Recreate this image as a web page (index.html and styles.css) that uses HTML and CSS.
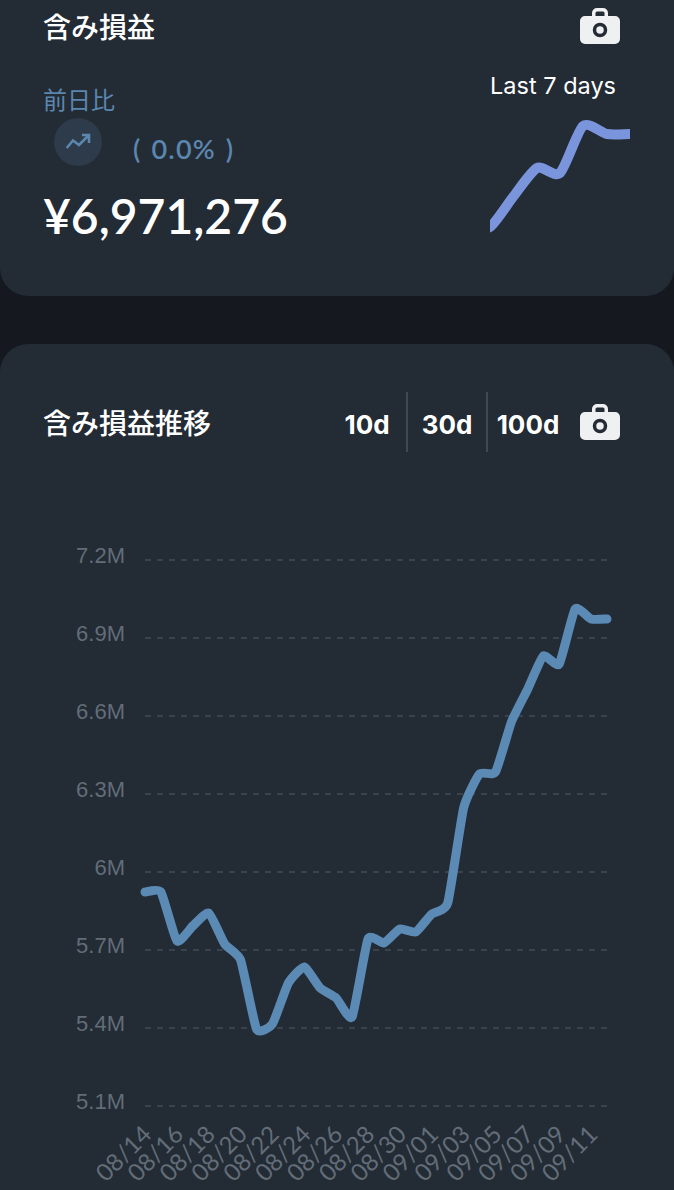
FILE: index.html
```html
<!DOCTYPE html>
<html lang="ja">
<head>
  <meta charset="utf-8">
  <title>含み損益</title>
  <link rel="stylesheet" href="styles.css">
</head>
<body>
  <section class="card card-summary">
    <div class="card-head">
      <h2 class="card-title">含み損益</h2>
      <svg class="camera" viewBox="0 0 40 36"><use href="#camera-icon"></use></svg>
    </div>
    <div class="summary">
      <div class="summary-left">
        <div class="compare-label">前日比</div>
        <div class="compare-row">
          <span class="trend-badge">
            <svg viewBox="0 0 48 48" width="48" height="48"><path d="M12.700 30L19 22.500l6 4.500 10-10M28 17h7v8" fill="none" stroke="#5b86ae" stroke-width="2.600"/></svg>
          </span>
          <span class="compare-pct">( 0.0% )</span>
        </div>
        <div class="amount">¥6,971,276</div>
      </div>
      <div class="summary-right">
        <div class="spark-label">Last 7 days</div>
        <svg class="spark" viewBox="490 110 140 130"><path id="sparkLine" fill="none" stroke="#7b95dd" stroke-width="10"/></svg>
      </div>
    </div>
  </section>

  <section class="card card-history">
    <div class="card-head history-head">
      <h2 class="card-title">含み損益推移</h2>
      <div class="ranges">
        <span class="range">10d</span>
        <span class="range">30d</span>
        <span class="range">100d</span>
      </div>
      <svg class="camera" viewBox="0 0 40 36"><use href="#camera-icon"></use></svg>
    </div>
    <svg class="chart" id="chart" viewBox="0 480 674 710">
      <g id="grid"></g>
      <path id="historyLine" fill="none" stroke="#5b8ab5" stroke-width="9" stroke-linecap="round" stroke-linejoin="round"/>
      <g id="xLabels"></g>
    </svg>
  </section>

  <svg class="defs" width="0" height="0">
    <symbol id="camera-icon" viewBox="0 0 40 36">
      <path fill="#eef0f2" fill-rule="evenodd" d="M12 8V5a5 5 0 0 1 5-5h6a5 5 0 0 1 5 5v3h7a5 5 0 0 1 5 5v18a5 5 0 0 1-5 5H5a5 5 0 0 1-5-5V13a5 5 0 0 1 5-5zM15.500 8h9V5a1.500 1.500 0 0 0-1.500-1.500h-6A1.500 1.500 0 0 0 15.500 5z"/>
      <circle cx="20" cy="22" r="5.500" fill="#eef0f2" stroke="#232b35" stroke-width="3.500"/>
    </symbol>
  </svg>

  <script src="chart.js"></script>
</body>
</html>
```

FILE: styles.css
```css
html, body {
    margin: 0;
    height: 1190px;
    overflow: hidden;
    background: #15191f;
}

body {
    color: #fff;
    font-family: "Lato", "Noto Sans CJK JP", sans-serif;
}

.card {
    background: #232b35;
}

.card-summary {
    height: 296px;
    box-sizing: border-box;
    padding-top: 8px;
    border-radius: 0 0 28px 28px;
}

.card-history {
    height: 846px;
    margin-top: 48px;
    border-radius: 28px 28px 0 0;
    overflow: hidden;
}

.card-head {
    display: flex;
    align-items: center;
    justify-content: space-between;
    height: 36px;
    padding: 0 54px 0 43px;
}

.card-title {
    margin: 0;
    font-family: "Noto Sans CJK JP", sans-serif;
    font-size: 28px;
    font-weight: 500;
    line-height: 40px;
}

.camera {
    display: block;
    width: 40px;
    height: 36px;
    flex: none;
}

.summary {
    display: flex;
    justify-content: space-between;
    padding-left: 43px;
}

.summary-left {
    padding-top: 37px;
}

.compare-label {
    font-family: "Noto Sans CJK JP", sans-serif;
    font-size: 24px;
    font-weight: 400;
    line-height: 36px;
    color: #5b86ae;
}

.compare-row {
    display: flex;
    align-items: center;
    height: 48px;
    margin-top: 1px;
    padding-left: 11px;
}

.trend-badge {
    display: flex;
    align-items: center;
    justify-content: center;
    width: 48px;
    height: 48px;
    border-radius: 50%;
    background: #2d3b4a;
}

.compare-pct {
    margin: 12px 0 0 31px;
    font-size: 27px;
    font-weight: 600;
    letter-spacing: 1.200px;
    word-spacing: 2px;
    color: #5b86ae;
    white-space: pre;
}

.amount {
    margin-top: 20px;
    font-size: 48px;
    font-weight: 600;
    line-height: 60px;
}

.summary-right {
    width: 184px;
    padding-top: 27px;
}

.spark-label {
    padding-right: 58px;
    font-family: "Inter", sans-serif;
    font-size: 23.500px;
    line-height: 30px;
    text-align: right;
    white-space: nowrap;
}

.spark {
    display: block;
    width: 140px;
    height: 130px;
    margin: 9px 0 0;
}

.history-head {
    height: 60px;
    padding-top: 48px;
    justify-content: flex-start;
}

.ranges {
    display: flex;
    margin-left: auto;
    margin-right: 12px;
}

.range {
    width: 80px;
    height: 60px;
    box-sizing: border-box;
    font-family: "Inter", sans-serif;
    font-size: 26px;
    font-weight: 700;
    line-height: 66px;
    text-align: center;
    border-right: 2px solid #3f4956;
}

.range:last-child {
    border-right: 0;
}

.chart {
    display: block;
    width: 674px;
    height: 710px;
    margin-top: 28px;
}

.defs {
    position: absolute;
}

.grid-line {
    stroke: #414b57;
    stroke-width: 1.500;
    stroke-dasharray: 6 6;
}

.y-label {
    fill: #626d78;
    font-family: "Liberation Sans", sans-serif;
    font-size: 22px;
    text-anchor: end;
}

.x-label {
    fill: #626d78;
    font-family: "Lato", sans-serif;
    font-size: 24px;
    text-anchor: end;
}
```

FILE: chart.js
```js
const NS = "http://www.w3.org/2000/svg";

// curve through the points, t = how round the corners are
function curve(pts, t) {
  let d = "M" + pts[0][0] + " " + pts[0][1];
  for (let i = 0; i < pts.length - 1; i++) {
    const p0 = pts[i - 1] || pts[i];
    const p1 = pts[i];
    const p2 = pts[i + 1];
    const p3 = pts[i + 2] || p2;
    const c1x = p1[0] + (p2[0] - p0[0]) * t;
    const c1y = p1[1] + (p2[1] - p0[1]) * t;
    const c2x = p2[0] - (p3[0] - p1[0]) * t;
    const c2y = p2[1] - (p3[1] - p1[1]) * t;
    d += "C" + c1x.toFixed(1) + " " + c1y.toFixed(1) + " " + c2x.toFixed(1) + " " + c2y.toFixed(1) + " " + p2[0] + " " + p2[1];
  }
  return d;
}

function addEl(parent, tag, cls, attrs, text) {
  const el = document.createElementNS(NS, tag);
  el.setAttribute("class", cls);
  for (const k in attrs) el.setAttribute(k, attrs[k]);
  if (text) el.textContent = text;
  parent.appendChild(el);
}

// Last 7 days
const spark = [[467, 230], [490, 227], [513, 197], [537, 168], [560, 173], [583, 126], [607, 134], [630, 134], [653, 134]];
document.getElementById("sparkLine").setAttribute("d", curve(spark, 0.12));

// grid
const ticks = ["7.2M", "6.9M", "6.6M", "6.3M", "6M", "5.7M", "5.4M", "5.1M"];
const grid = document.getElementById("grid");
ticks.forEach((label, i) => {
  const y = 560 + i * 78;
  addEl(grid, "line", "grid-line", { x1: 145, x2: 607, y1: y, y2: y });
  addEl(grid, "text", "y-label", { x: 125, y: y + 3 }, label);
});

// history
const ys = [892, 892, 941, 926, 913, 944, 960, 1029, 1024, 983, 967, 988, 998, 1017, 939,
  943, 929, 932, 914, 903, 808, 774, 772, 722, 690, 656, 664, 609, 619, 619];
const line = ys.map((y, i) => [+(145 + i * 15.93).toFixed(1), y]);
document.getElementById("historyLine").setAttribute("d", curve(line, 0.08));

const dates = ["08/14", "08/16", "08/18", "08/20", "08/22", "08/24", "08/26", "08/28",
  "08/30", "09/01", "09/03", "09/05", "09/07", "09/09", "09/11"];
const xl = document.getElementById("xLabels");
dates.forEach((label, i) => {
  const x = 153 + i * 31.86;
  addEl(xl, "text", "x-label", { x: x, y: 1136, transform: "rotate(-45 " + x + " 1136)" }, label);
});
```
